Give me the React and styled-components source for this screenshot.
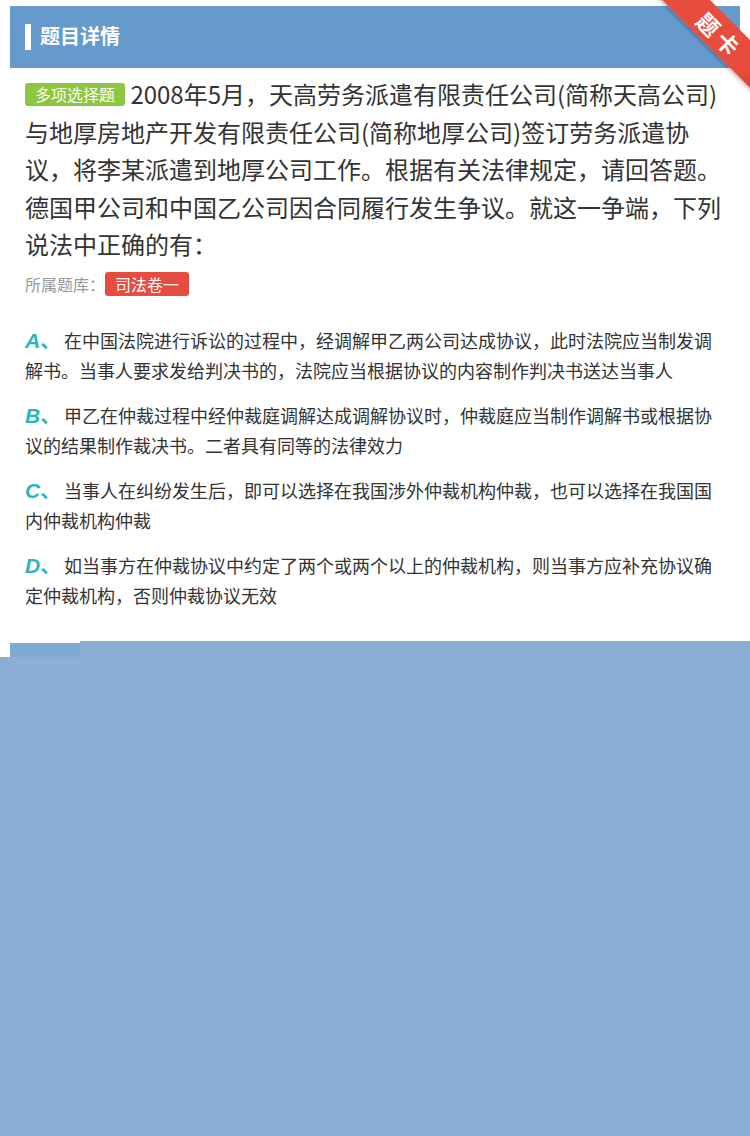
import styled, { createGlobalStyle } from "styled-components";

const GlobalStyle = createGlobalStyle`
  html, body {
    margin: 0;
    padding: 0;
    background: #fff;
  }
  body {
    font-family: "Noto Sans CJK SC", "Noto Sans", sans-serif;
    color: #333;
  }
`;

const options = [
  {
    letter: "A",
    text: "在中国法院进行诉讼的过程中，经调解甲乙两公司达成协议，此时法院应当制发调解书。当事人要求发给判决书的，法院应当根据协议的内容制作判决书送达当事人",
  },
  {
    letter: "B",
    text: "甲乙在仲裁过程中经仲裁庭调解达成调解协议时，仲裁庭应当制作调解书或根据协议的结果制作裁决书。二者具有同等的法律效力",
  },
  {
    letter: "C",
    text: "当事人在纠纷发生后，即可以选择在我国涉外仲裁机构仲裁，也可以选择在我国国内仲裁机构仲裁",
  },
  {
    letter: "D",
    text: "如当事方在仲裁协议中约定了两个或两个以上的仲裁机构，则当事方应补充协议确定仲裁机构，否则仲裁协议无效",
  },
];

export default function App() {
  return (
    <>
      <GlobalStyle />
      <Page>
        <Card>
          <Header>
            <HeaderBar />
            <HeaderTitle>题目详情</HeaderTitle>
          </Header>
          <Content>
            <Question>
              <TypeTag>多项选择题</TypeTag> 2008年5月，天高劳务派遣有限责任公司(简称天高公司)与地厚房地产开发有限责任公司(简称地厚公司)签订劳务派遣协议，将李某派遣到地厚公司工作。根据有关法律规定，请回答题。德国甲公司和中国乙公司因合同履行发生争议。就这一争端，下列说法中正确的有：
            </Question>
            <BankRow>
              <BankLabel>所属题库：</BankLabel>
              <BankTag>司法卷一</BankTag>
            </BankRow>
            <OptionList>
              {options.map((o) => (
                <Option key={o.letter}>
                  <OptionLetter>
                    {o.letter}
                    <Comma>、</Comma>
                  </OptionLetter>
                  {o.text}
                </Option>
              ))}
            </OptionList>
          </Content>
        </Card>
        <Mask>
          <MaskEdge>
            <EdgeGap />
            <EdgeTab />
            <EdgeFill />
          </MaskEdge>
          <MaskFill />
        </Mask>
        <RibbonBox>
          <Ribbon>题卡</Ribbon>
        </RibbonBox>
      </Page>
    </>
  );
}

const Page = styled.div`
  position: relative;
  min-height: 100vh;
  display: flex;
  flex-direction: column;
  overflow: hidden;
`;

const Card = styled.div`
  margin: 6px 10px 0;
  background: #fff;
`;

const Header = styled.div`
  height: 62px;
  background: #6699cc;
  display: flex;
  align-items: center;
  padding-left: 15px;
  gap: 9px;
`;

const HeaderBar = styled.span`
  width: 6px;
  height: 26px;
  background: #fff;
`;

const HeaderTitle = styled.h2`
  margin: 0 0 3px;
  font-size: 20px;
  font-weight: bold;
  color: #fff;
  line-height: 1;
`;

const Content = styled.div`
  padding: 7px 15px 31px;
`;

const Question = styled.p`
  margin: 0;
  font-size: 24px;
  line-height: 37.5px;
  color: #333;
`;

const TypeTag = styled.span`
  display: inline-block;
  background: #8dc63f;
  color: #fff;
  font-size: 16px;
  line-height: 23px;
  padding: 0 10px;
  border-radius: 3px;
  vertical-align: 3px;
`;

const BankRow = styled.div`
  margin-top: 9px;
  display: flex;
  align-items: center;
  height: 24px;
`;

const BankLabel = styled.span`
  font-size: 16px;
  color: #999;
`;

const BankTag = styled.span`
  background: #e64c3f;
  color: #fff;
  font-size: 16px;
  line-height: 24px;
  padding: 0 10px;
  border-radius: 3px;
`;

const OptionList = styled.div`
  margin-top: 29px;
  display: flex;
  flex-direction: column;
  gap: 15px;
`;

const Option = styled.p`
  margin: 0;
  font-size: 18px;
  line-height: 30px;
  color: #333;
`;

const OptionLetter = styled.span`
  display: inline-block;
  width: 39px;
  line-height: 20px;
  color: #2ab5b8;
  font-family: "Liberation Sans", "Noto Sans CJK SC", sans-serif;
  font-size: 21px;
  font-weight: bold;
  font-style: italic;
`;

const Comma = styled.span`
  font-family: "Noto Sans CJK SC", sans-serif;
  font-style: normal;
  font-size: 20px;
  line-height: 20px;
`;

const Mask = styled.div`
  flex: 1;
  display: flex;
  flex-direction: column;
`;

const MaskEdge = styled.div`
  display: flex;
  height: 16px;
`;

const EdgeGap = styled.div`
  width: 10px;
  background: #fff;
`;

const EdgeTab = styled.div`
  width: 70px;
  border-top: 2px solid #fff;
  background: #80a9d6;
`;

const EdgeFill = styled.div`
  flex: 1;
  background: #8aaed4;
`;

const MaskFill = styled.div`
  flex: 1;
  background: #8aaed4;
`;

const RibbonBox = styled.div`
  position: absolute;
  top: 0;
  right: 0;
  width: 100px;
  height: 100px;
  overflow: hidden;
`;

const Ribbon = styled.div`
  position: absolute;
  left: -11px;
  top: 16px;
  width: 160px;
  height: 34px;
  transform: rotate(45deg);
  background: linear-gradient(to right, #e84c3d 0%, #e84c3d 78%, #c83a2e 100%);
  box-shadow: 0 2px 4px rgba(0, 0, 0, 0.25);
  color: #fff;
  font-size: 22px;
  font-weight: bold;
  letter-spacing: 5px;
  text-indent: 5px;
  display: flex;
  align-items: center;
  justify-content: center;
`;
